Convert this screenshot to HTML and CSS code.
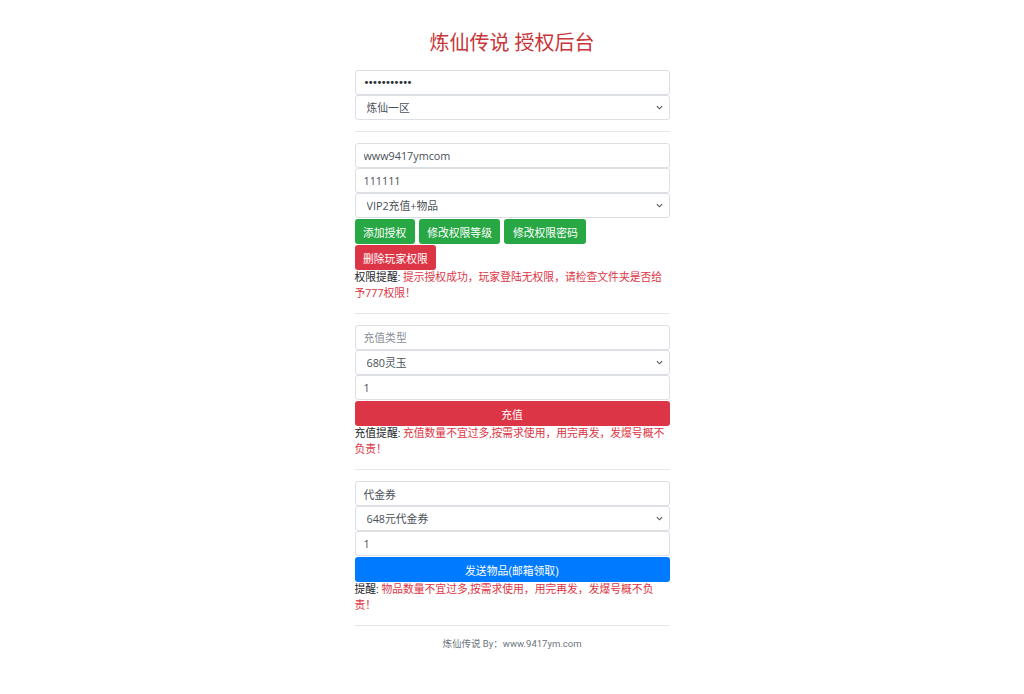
FILE: index.html
```html
<!DOCTYPE html>
<html lang="zh-CN">
<head>
<meta charset="utf-8">
<title>炼仙传说 授权后台</title>
<link rel="stylesheet" href="styles.css">
</head>
<body>
<div class="container">
  <h3 class="title">炼仙传说 授权后台</h3>

  <div class="group">
    <input class="field pass" type="password" value="12345678901">
    <select class="field">
      <option>炼仙一区</option>
    </select>
  </div>
  <hr class="sep">

  <div class="group">
    <input class="field" type="text" value="www9417ymcom">
    <input class="field" type="text" value="111111">
    <select class="field">
      <option>VIP2充值+物品</option>
    </select>
    <div class="btn-row">
      <button class="btn btn-green">添加授权</button>
      <button class="btn btn-green">修改权限等级</button>
      <button class="btn btn-green">修改权限密码</button>
      <button class="btn btn-red">删除玩家权限</button>
    </div>
    <p class="note">权限提醒: <span class="warn">提示授权成功，玩家登陆无权限，请检查文件夹是否给予777权限！</span></p>
  </div>
  <hr class="sep">

  <div class="group">
    <input class="field" type="text" placeholder="充值类型">
    <select class="field">
      <option>680灵玉</option>
    </select>
    <input class="field" type="text" value="1">
    <button class="btn btn-red btn-block">充值</button>
    <p class="note">充值提醒: <span class="warn">充值数量不宜过多,按需求使用，用完再发，发爆号概不负责！</span></p>
  </div>
  <hr class="sep">

  <div class="group">
    <input class="field" type="text" value="代金券">
    <select class="field">
      <option>648元代金券</option>
    </select>
    <input class="field" type="text" value="1">
    <button class="btn btn-blue btn-block">发送物品(邮箱领取)</button>
    <p class="note">提醒: <span class="warn">物品数量不宜过多,按需求使用，用完再发，发爆号概不负责！</span></p>
  </div>
  <hr class="sep">

  <footer class="footer">炼仙传说 By：www.9417ym.com</footer>
</div>
</body>
</html>
```

FILE: styles.css
```css
html, body {
  margin: 0;
  padding: 0;
  background: #ffffff;
}

body {
  font-family: Roboto, "Noto Sans CJK SC", sans-serif;
  font-size: 10.8px;
  color: #212529;
}

.container {
  width: 315px;
  margin: 0 auto;
  padding-top: 31px;
}

.title {
  margin: 0 0 15px;
  font-size: 20px;
  line-height: 24px;
  font-weight: 400;
  text-align: center;
  color: #c9363a;
}

.group {
  display: flex;
  flex-direction: column;
}

.field {
  box-sizing: border-box;
  width: 100%;
  height: 25px;
  margin: 0;
  padding: 0 8px;
  border: 1px solid #dcdfe3;
  border-radius: 3px;
  background-color: #ffffff;
  font-family: "Open Sans", "Noto Sans CJK SC", sans-serif;
  font-size: 10.8px;
  color: #495057;
  outline: none;
}

.pass {
  font-family: "DejaVu Sans", sans-serif;
  font-size: 10px;
  letter-spacing: -1.6px;
  color: #2b3035;
}

select.field {
  appearance: none;
  -webkit-appearance: none;
  padding: 0 20px 0 11px;
  background-image: url("data:image/svg+xml;utf8,<svg xmlns='http://www.w3.org/2000/svg' width='8' height='5' viewBox='0 0 8 5'><path d='M1 1l3 3 3-3' fill='none' stroke='%23555' stroke-width='1.3'/></svg>");
  background-repeat: no-repeat;
  background-position: right 6px center;
  background-size: 7px 5px;
}

.field::placeholder {
  color: #8a9096;
}

.btn-row {
  display: flex;
  flex-wrap: wrap;
  column-gap: 4px;
  row-gap: 1px;
  margin-top: 1px;
}

.btn {
  box-sizing: border-box;
  height: 25px;
  padding: 0 8.5px;
  border: none;
  border-radius: 3px;
  font-family: Roboto, "Noto Sans CJK SC", sans-serif;
  font-size: 10.8px;
  color: #ffffff;
  cursor: pointer;
}

.btn-green { background: #28a745; }
.btn-red { background: #dc3545; }
.btn-blue { background: #007bff; }

.btn-block {
  width: 100%;
  margin-top: 1px;
}

.note {
  margin: 0;
  line-height: 16px;
  color: #212529;
}

.warn {
  color: #dc3545;
}

.sep {
  margin: 11px 0;
  border: 0;
  border-top: 1px solid #e6e8eb;
}

.footer {
  padding-top: 0;
  font-size: 9.5px;
  line-height: 14px;
  text-align: center;
  color: #6c757d;
}
```
